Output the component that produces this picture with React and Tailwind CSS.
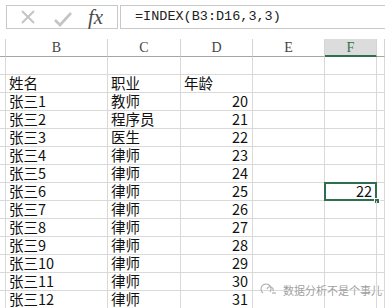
import React from "react";

const rows = [
  { name: "", job: "", age: "" },
  { name: "姓名", job: "职业", age: "年龄", head: true },
  { name: "张三1", job: "教师", age: "20" },
  { name: "张三2", job: "程序员", age: "21" },
  { name: "张三3", job: "医生", age: "22" },
  { name: "张三4", job: "律师", age: "23" },
  { name: "张三5", job: "律师", age: "24" },
  { name: "张三6", job: "律师", age: "25", pick: true },
  { name: "张三7", job: "律师", age: "26" },
  { name: "张三8", job: "律师", age: "27" },
  { name: "张三9", job: "律师", age: "28" },
  { name: "张三10", job: "律师", age: "29" },
  { name: "张三11", job: "律师", age: "30" },
  { name: "张三12", job: "律师", age: "31" },
];

const cols = "grid grid-cols-[6px_102px_73px_72px_72px_52px_1fr]";
const cell = "h-[18px] border-r border-b border-[#d9d9d9]";
const txt = " flex items-end leading-[16px] pb-[1px]";
const cjk = { fontFamily: '"Noto Sans CJK SC", "Noto Sans", sans-serif' };

const FormulaBar = () => (
  <div className="h-[39px] flex items-start pt-[5px] bg-white">
    {/* cancel / enter / fx */}
    <div className="ml-[6px] w-[112px] h-[24px] border border-[#c8c8c8] flex items-center">
      <svg width="16" height="16" viewBox="0 0 16 16" className="ml-[13px]">
        <path d="M2 2 L14 14 M14 2 L2 14" stroke="#c4c4c4" strokeWidth="2" />
      </svg>
      <svg width="20" height="16" viewBox="0 0 20 16" className="ml-[17px] mt-[3px]">
        <path d="M2 9 L7 14 L18 2" stroke="#c4c4c4" strokeWidth="2.6" fill="none" />
      </svg>
      <span
        className="ml-[15px] text-[21px] italic text-[#4d4d4d] leading-none"
        style={{ fontFamily: '"Liberation Serif", serif' }}
      >
        fx
      </span>
    </div>
    <div className="ml-[2px] flex-1 h-[24px] border-y border-l border-[#c8c8c8] flex items-center pl-[14px]">
      <span
        className="text-[13.5px] text-[#222]"
        style={{ fontFamily: '"Liberation Mono", monospace' }}
      >
        =INDEX(B3:D16,3,3)
      </span>
    </div>
  </div>
);

const Header = () => (
  <div className={cols} style={{ fontFamily: '"Liberation Serif", serif' }}>
    {["", "B", "C", "D", "E", "F", ""].map((c, i) => (
      <div
        key={i}
        className={
          "h-[18px] border-r border-[#d4d4d4] flex items-center justify-center text-[14px] " +
          (c === "F"
            ? "bg-[#dcdcdc] border-b-2 border-b-[#2f6f4e] text-[#2f6f4e]"
            : "border-b border-b-[#a6a6a6] text-[#444]")
        }
      >
        {c}
      </div>
    ))}
  </div>
);

export default function App() {
  return (
    <div className="w-[385px] h-[308px] overflow-hidden bg-white relative">
      <FormulaBar />
      <Header />
      <div className="text-[14.5px] text-[#111]" style={cjk}>
        {rows.map((r, i) => (
          <div key={i} className={cols}>
            <div className={cell} />
            <div className={cell + txt + " pl-[3px]"}>{r.name}</div>
            <div className={cell + txt + " pl-[3px]"}>{r.job}</div>
            <div className={cell + txt + (r.head ? " pl-[3px]" : " justify-end pr-[4px]")}>
              {r.age}
            </div>
            <div className={cell} />
            <div className={cell + txt + " relative justify-end pr-[4px]"}>
              {r.pick && (
                <>
                  22
                  <div className="absolute -left-px -top-px right-[-1px] bottom-[-1px] border-2 border-[#2f6f4e]" />
                  <div className="absolute right-[-4px] bottom-[-4px] w-[6px] h-[6px] bg-[#2f6f4e] border border-white" />
                </>
              )}
            </div>
            <div className={cell} />
          </div>
        ))}
      </div>

      {/* watermark */}
      <div className="absolute left-[259px] top-[283px] flex items-center gap-[6px]">
        <svg width="18" height="14" viewBox="0 0 18 14">
          <path d="M4 10 A5 5 0 1 1 11 9" stroke="#b0b0b0" strokeWidth="1.2" fill="none" />
          <path d="M8 6 A3 3 0 1 1 14 8" stroke="#b0b0b0" strokeWidth="1.2" fill="none" />
          <path d="M13 10 L17 10" stroke="#b0b0b0" strokeWidth="1.2" />
        </svg>
        <span
          className="text-[11px] text-[#a0a0a0] leading-none"
          style={{ ...cjk, textShadow: "0 0 2px #fff, 0 0 2px #fff" }}
        >
          数据分析不是个事儿
        </span>
      </div>
    </div>
  );
}
